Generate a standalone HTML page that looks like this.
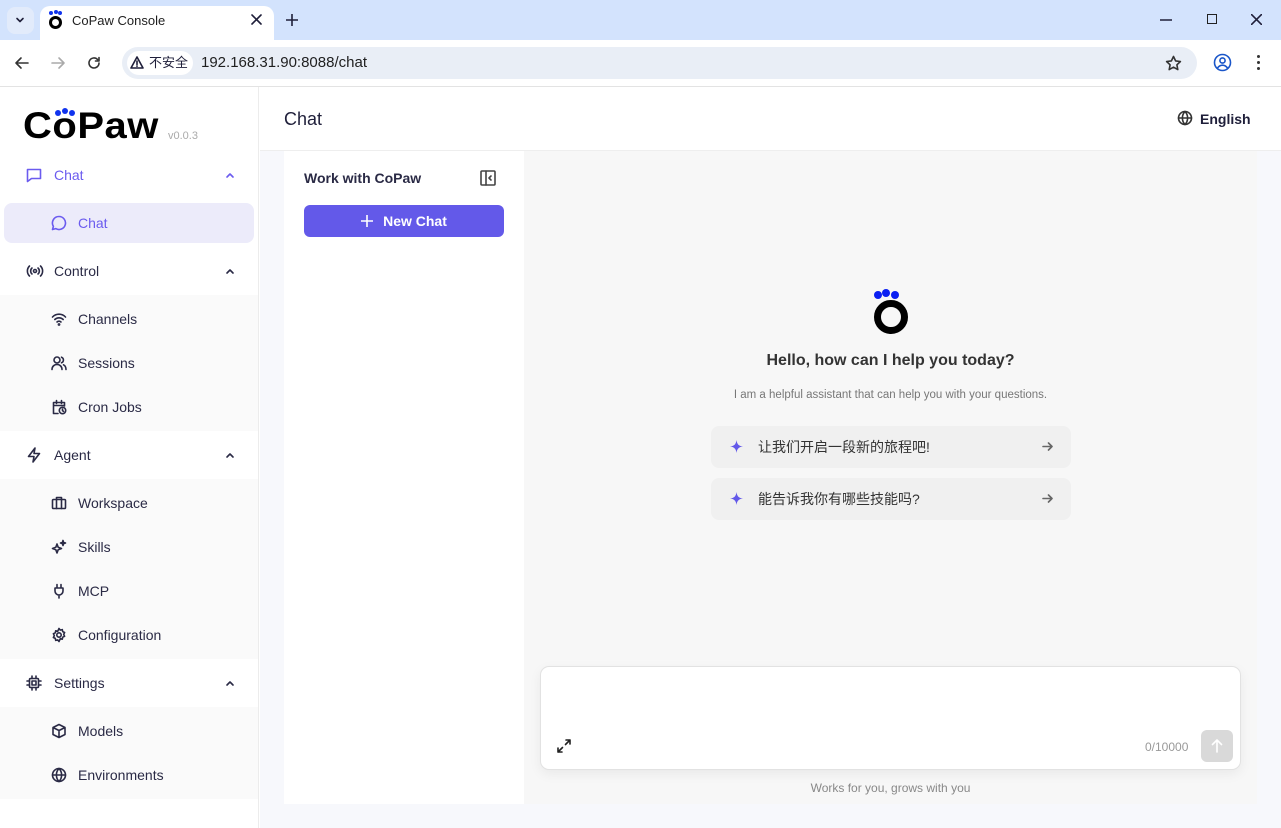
<!DOCTYPE html>
<html><head><meta charset="utf-8"><style>
*{box-sizing:border-box;margin:0;padding:0}
body{width:1281px;height:828px;overflow:hidden;font-family:"Liberation Sans","Noto Sans CJK SC",sans-serif;background:#fff;position:relative;color:#1f1f3a}
.abs{position:absolute}
.tabbar{left:0;top:0;width:1281px;height:40px;background:#d3e3fd}
.tab{left:40px;top:6px;width:234px;height:34px;background:#fff;border-radius:10px 10px 0 0}
.addr{left:0;top:40px;width:1281px;height:47px;background:#fff;border-bottom:1px solid #e3e3e3}
.pill{left:122px;top:47px;width:1075px;height:32px;background:#e9eef6;border-radius:16px}
.sec{left:127px;top:51px;width:66px;height:24px;background:#fff;border-radius:12px;font-size:13px;line-height:24px;padding-left:22px}
.side{left:0;top:87px;width:259px;height:741px;background:#fff;border-right:1px solid #ececec}
.grp{position:absolute;left:0;width:258px;height:48px;font-size:14px;line-height:48px;padding-left:54px;color:#2a2a45}
.grp .ic{position:absolute;left:26px;top:16px}
.grp .car{position:absolute;left:225px;top:20px}
.subbg{position:absolute;left:0;width:258px;background:#fafafa}
.it{position:absolute;left:0;width:258px;height:44px;font-size:14px;line-height:44px;padding-left:78px;color:#2a2a45}
.it svg{position:absolute;left:51px;top:14px}
svg{fill:none;stroke:currentColor;stroke-width:1.6;stroke-linecap:round;stroke-linejoin:round}
.sug{position:absolute;left:711px;width:360px;height:42px;background:#f0f0f0;border-radius:8px;font-size:14px;line-height:42px;padding-left:47px;color:#333}
.sug .st{position:absolute;left:19px;top:14px}
.sug .ar{position:absolute;left:331px;top:15px;color:#666}
</style></head><body>
<div class="abs tabbar"></div>
<div class="abs" style="left:7px;top:7px;width:27px;height:27px;background:#e2ebfb;border-radius:8px"></div>
<svg class="abs" style="left:15px;top:15px" width="10" height="10" viewBox="0 0 10 10" stroke-width="2"><path d="M2 3.5l3 3 3-3"/></svg>
<div class="abs tab"></div>
<div class="abs" style="left:49px;top:11px;width:13px;height:18px">
 <div class="abs" style="left:0;top:0;width:4px;height:4px;border-radius:50%;background:#1033ee"></div>
 <div class="abs" style="left:4.5px;top:-1px;width:4px;height:4px;border-radius:50%;background:#1033ee"></div>
 <div class="abs" style="left:9px;top:0;width:4px;height:4px;border-radius:50%;background:#1033ee"></div>
 <div class="abs" style="left:0;top:5px;width:13px;height:13px;border-radius:50%;border:3.5px solid #000"></div>
</div>
<div class="abs" style="left:72px;top:13px;font-size:13px;color:#1f1f1f">CoPaw Console</div>
<svg class="abs" style="left:251px;top:14px" width="11" height="11" viewBox="0 0 11 11" stroke-width="1.6"><path d="M1 1l9 9M10 1l-9 9"/></svg>
<svg class="abs" style="left:286px;top:14px" width="12" height="12" viewBox="0 0 12 12" stroke-width="1.5"><path d="M6 0v12M0 6h12"/></svg>
<svg class="abs" style="left:1160px;top:19px" width="12" height="2" viewBox="0 0 12 2" stroke-width="1.2"><path d="M0 1h12"/></svg>
<div class="abs" style="left:1207px;top:14px;width:10px;height:10px;border:1.2px solid #222"></div>
<svg class="abs" style="left:1251px;top:14px" width="11" height="11" viewBox="0 0 11 11" stroke-width="1.2"><path d="M0 0l11 11M11 0l-11 11"/></svg>
<div class="abs addr"></div>
<svg class="abs" style="left:14px;top:55px;color:#333" width="16" height="16" viewBox="0 0 16 16" stroke-width="1.8"><path d="M14 8H2M7 3L2 8l5 5"/></svg>
<svg class="abs" style="left:50px;top:55px;color:#aaa" width="16" height="16" viewBox="0 0 16 16" stroke-width="1.8"><path d="M2 8h12M9 3l5 5-5 5"/></svg>
<svg class="abs" style="left:86px;top:55px;color:#333" width="16" height="16" viewBox="0 0 16 16" stroke-width="1.8"><path d="M13 8a5 5 0 1 1-1.5-3.6M13 2.5v3.5H9.5"/></svg>
<div class="abs pill"></div>
<div class="abs sec"><svg class="abs" style="left:3px;top:5px" width="14" height="13" viewBox="0 0 14 13" stroke-width="1.4"><path d="M7 1L1 12h12zM7 5v3.5M7 10v.3"/></svg>不安全</div>
<div class="abs" style="left:201px;top:54px;font-size:15px;color:#1f1f1f">192.168.31.90:8088/chat</div>
<svg class="abs" style="left:1165px;top:55px;color:#333" width="17" height="17" viewBox="0 0 17 17" stroke-width="1.5"><path d="M8.5 1.5l2.1 4.4 4.8.6-3.5 3.3.9 4.8-4.3-2.4-4.3 2.4.9-4.8L1.6 6.5l4.8-.6z"/></svg>
<svg class="abs" style="left:1213px;top:53px;color:#1a56c9" width="19" height="19" viewBox="0 0 19 19" stroke-width="1.8"><circle cx="9.5" cy="9.5" r="8"/><circle cx="9.5" cy="7.5" r="2.6"/><path d="M4.5 15c1.5-2 3-2.8 5-2.8s3.5.8 5 2.8"/></svg>
<div class="abs" style="left:1257px;top:55px;width:3px;height:3px;border-radius:50%;background:#333;box-shadow:0 6px #333,0 12px #333"></div>

<div class="abs side">
 <div class="abs" style="left:23px;top:18px;font-size:37px;font-weight:bold;color:#000;letter-spacing:0.5px;font-family:'Liberation Sans',sans-serif;transform:scaleX(1.08);transform-origin:left">CoPaw</div>
 <div class="abs" style="left:55px;top:21px;width:20px;height:6px">
  <div class="abs" style="left:0;top:2px;width:6px;height:6px;border-radius:50%;background:#1033ee"></div>
  <div class="abs" style="left:7px;top:0;width:6px;height:6px;border-radius:50%;background:#1033ee"></div>
  <div class="abs" style="left:14px;top:2px;width:6px;height:6px;border-radius:50%;background:#1033ee"></div>
 </div>
 <div class="abs" style="left:168px;top:43px;font-size:11px;color:#aaa">v0.0.3</div>

 <div class="grp" style="top:64px;color:#6b5bef"><svg class="ic" width="16" height="16" viewBox="0 0 16 16" style="color:#6b5bef"><path d="M1.5 2.5h13v9h-9l-4 3z"/></svg>Chat<svg class="car" width="10" height="8" viewBox="0 0 10 8" stroke-width="2"><path d="M2 6l3-3 3 3"/></svg></div>
 <div class="abs" style="left:4px;top:116px;width:250px;height:40px;background:#ecebfa;border-radius:8px"></div>
 <div class="it" style="top:114px;color:#6b5bef"><svg width="16" height="16" viewBox="0 0 16 16"><path d="M8 1.5a6.5 6.5 0 1 1-3.3 12.1L1.5 14.5l.9-3.1A6.5 6.5 0 0 1 8 1.5z"/></svg>Chat</div>

 <div class="grp" style="top:160px"><svg class="ic" width="18" height="16" viewBox="0 0 18 16"><circle cx="9" cy="8" r="1.5"/><path d="M6 5a4 4 0 0 0 0 6M12 5a4 4 0 0 1 0 6M3.5 3a7 7 0 0 0 0 10M14.5 3a7 7 0 0 1 0 10"/></svg>Control<svg class="car" width="10" height="8" viewBox="0 0 10 8" stroke-width="2"><path d="M2 6l3-3 3 3"/></svg></div>
 <div class="subbg" style="top:208px;height:136px"></div>
 <div class="it" style="top:210px"><svg width="16" height="16" viewBox="0 0 16 16"><path d="M1.5 6a9 9 0 0 1 13 0M3.8 8.5a6 6 0 0 1 8.4 0M6 11a3 3 0 0 1 4 0"/><circle cx="8" cy="13.5" r=".6"/></svg>Channels</div>
 <div class="it" style="top:254px"><svg width="16" height="16" viewBox="0 0 16 16"><circle cx="6" cy="5" r="3"/><path d="M1 14.5c0-3 2.2-5 5-5s5 2 5 5M10.5 2.2a3 3 0 0 1 0 5.6M12.5 9.8c1.5.7 2.5 2.4 2.5 4.7"/></svg>Sessions</div>
 <div class="it" style="top:298px"><svg width="16" height="16" viewBox="0 0 16 16"><path d="M7 14.5H2.5v-11h11V7M2.5 6.5h11M5.5 1.5v3M10.5 1.5v3"/><circle cx="11.5" cy="11.5" r="3.2"/><path d="M11.5 10v1.6l1 .8"/></svg>Cron Jobs</div>

 <div class="grp" style="top:344px"><svg class="ic" width="16" height="16" viewBox="0 0 16 16"><path d="M9 1L2.5 9.5H8L7 15l6.5-8.5H8z"/></svg>Agent<svg class="car" width="10" height="8" viewBox="0 0 10 8" stroke-width="2"><path d="M2 6l3-3 3 3"/></svg></div>
 <div class="subbg" style="top:392px;height:180px"></div>
 <div class="it" style="top:394px"><svg width="16" height="16" viewBox="0 0 16 16"><rect x="1.5" y="4.5" width="13" height="9" rx="1"/><path d="M5.5 4.5v-2h5v2M5.5 4.5v9M10.5 4.5v9"/></svg>Workspace</div>
 <div class="it" style="top:438px"><svg width="16" height="16" viewBox="0 0 16 16"><path d="M6 5l1.2 3.3L10.5 9.5 7.2 10.7 6 14l-1.2-3.3L1.5 9.5l3.3-1.2zM12 1.5l.6 1.9 1.9.6-1.9.6-.6 1.9-.6-1.9-1.9-.6 1.9-.6z"/></svg>Skills</div>
 <div class="it" style="top:482px"><svg width="16" height="16" viewBox="0 0 16 16"><path d="M6 1.5v3.5M10 1.5v3.5M4 5h8v3a4 4 0 0 1-8 0zM8 12v3"/></svg>MCP</div>
 <div class="it" style="top:526px"><svg width="16" height="16" viewBox="0 0 16 16"><circle cx="8" cy="8" r="2.2"/><path d="M8 1.5l1.3 1.6 2-.5.4 2 1.9.9-.9 1.9.9 1.9-1.9.9-.4 2-2-.5L8 14.5l-1.3-1.6-2 .5-.4-2-1.9-.9.9-1.9-.9-1.9 1.9-.9.4-2 2 .5z"/></svg>Configuration</div>

 <div class="grp" style="top:572px"><svg class="ic" width="16" height="16" viewBox="0 0 16 16"><rect x="3.5" y="3.5" width="9" height="9" rx="1"/><rect x="6" y="6" width="4" height="4"/><path d="M6 1v2.5M10 1v2.5M6 12.5V15M10 12.5V15M1 6h2.5M1 10h2.5M12.5 6H15M12.5 10H15"/></svg>Settings<svg class="car" width="10" height="8" viewBox="0 0 10 8" stroke-width="2"><path d="M2 6l3-3 3 3"/></svg></div>
 <div class="subbg" style="top:620px;height:92px"></div>
 <div class="it" style="top:622px"><svg width="16" height="16" viewBox="0 0 16 16"><path d="M8 1.5l6 3v7l-6 3-6-3v-7zM2 4.5l6 3 6-3M8 7.5v7"/></svg>Models</div>
 <div class="it" style="top:666px"><svg width="16" height="16" viewBox="0 0 16 16"><circle cx="8" cy="8" r="6.5"/><path d="M1.5 8h13M8 1.5c2 2 2.6 4.2 2.6 6.5S10 12.5 8 14.5C6 12.5 5.4 10.3 5.4 8S6 3.5 8 1.5"/></svg>Environments</div>
</div>

<div class="abs" style="left:260px;top:87px;width:1021px;height:64px;background:#fff;border-bottom:1px solid #eee"></div>
<div class="abs" style="left:284px;top:109px;font-size:18px;color:#1f1f3a">Chat</div>
<svg class="abs" style="left:1177px;top:110px;color:#333" width="16" height="16" viewBox="0 0 16 16"><circle cx="8" cy="8" r="6.5"/><path d="M1.5 8h13M8 1.5c2 2 2.6 4.2 2.6 6.5S10 12.5 8 14.5C6 12.5 5.4 10.3 5.4 8S6 3.5 8 1.5"/></svg>
<div class="abs" style="left:1200px;top:111px;font-size:14px;font-weight:bold;color:#1f1f3a">English</div>

<div class="abs" style="left:260px;top:151px;width:1021px;height:677px;background:#f7f8fc"></div>
<div class="abs" style="left:284px;top:151px;width:240px;height:653px;background:#fff"></div>
<div class="abs" style="left:304px;top:170px;font-size:14px;font-weight:bold;color:#2a2a45">Work with CoPaw</div>
<svg class="abs" style="left:480px;top:170px;color:#444" width="16" height="16" viewBox="0 0 16 16" stroke-width="1.3"><rect x="1" y="1" width="14" height="14" rx="1"/><path d="M6 1v14M11 6l-2 2 2 2"/></svg>
<div class="abs" style="left:304px;top:205px;width:200px;height:32px;background:#6359e9;border-radius:6px;color:#fff;font-size:14px;font-weight:bold;text-align:center;line-height:32px"><svg style="vertical-align:-1px;margin-right:10px" width="12" height="12" viewBox="0 0 12 12" stroke-width="1.5"><path d="M6 0v12M0 6h12"/></svg>New Chat</div>

<div class="abs" style="left:524px;top:151px;width:733px;height:653px;background:#f7f7f7"></div>
<div class="abs" style="left:873px;top:289px;width:36px;height:45px">
 <div class="abs" style="left:1px;top:2px;width:8px;height:8px;border-radius:50%;background:#0a1ff2"></div>
 <div class="abs" style="left:9px;top:0;width:8px;height:8px;border-radius:50%;background:#0a1ff2"></div>
 <div class="abs" style="left:18px;top:2px;width:8px;height:8px;border-radius:50%;background:#0a1ff2"></div>
 <div class="abs" style="left:1px;top:11px;width:34px;height:34px;border-radius:50%;border:7px solid #000"></div>
</div>
<div class="abs" style="left:524px;top:352px;width:733px;text-align:center;font-size:16px;font-weight:bold;color:#333">Hello, how can I help you today?</div>
<div class="abs" style="left:524px;top:389px;width:733px;text-align:center;font-size:11.5px;color:#777">I am a helpful assistant that can help you with your questions.</div>
<div class="sug" style="top:426px"><svg class="st" width="13" height="13" viewBox="0 0 13 13" style="fill:#6359e9;stroke:none"><path d="M6.5 0C7 4 8.5 6 13 6.5 8.5 7 7 9 6.5 13 6 9 4.5 7 0 6.5 4.5 6 6 4 6.5 0z"/></svg>让我们开启一段新的旅程吧!<svg class="ar" width="11" height="11" viewBox="0 0 11 11" stroke-width="1.2"><path d="M1 5.5h9M6.5 2l3.5 3.5L6.5 9"/></svg></div>
<div class="sug" style="top:478px"><svg class="st" width="13" height="13" viewBox="0 0 13 13" style="fill:#6359e9;stroke:none"><path d="M6.5 0C7 4 8.5 6 13 6.5 8.5 7 7 9 6.5 13 6 9 4.5 7 0 6.5 4.5 6 6 4 6.5 0z"/></svg>能告诉我你有哪些技能吗?<svg class="ar" width="11" height="11" viewBox="0 0 11 11" stroke-width="1.2"><path d="M1 5.5h9M6.5 2l3.5 3.5L6.5 9"/></svg></div>

<div class="abs" style="left:540px;top:666px;width:701px;height:104px;background:#fff;border:1px solid #e2e2e2;border-radius:9px;box-shadow:0 4px 12px rgba(0,0,0,.06)"></div>
<svg class="abs" style="left:556px;top:738px;color:#222" width="16" height="16" viewBox="0 0 16 16" stroke-width="1.4"><path d="M10 2h4v4M14 2l-4.5 4.5M6 14H2v-4M2 14l4.5-4.5"/></svg>
<div class="abs" style="left:1145px;top:740px;font-size:12px;color:#999">0/10000</div>
<div class="abs" style="left:1201px;top:730px;width:32px;height:32px;background:#d9d9d9;border-radius:6px"></div>
<svg class="abs" style="left:1211px;top:739px;color:#fff" width="12" height="14" viewBox="0 0 12 14" stroke-width="1.3"><path d="M6 13V1M1.5 5.5L6 1l4.5 4.5"/></svg>
<div class="abs" style="left:524px;top:781px;width:733px;text-align:center;font-size:12px;color:#888">Works for you, grows with you</div>
</body></html>
